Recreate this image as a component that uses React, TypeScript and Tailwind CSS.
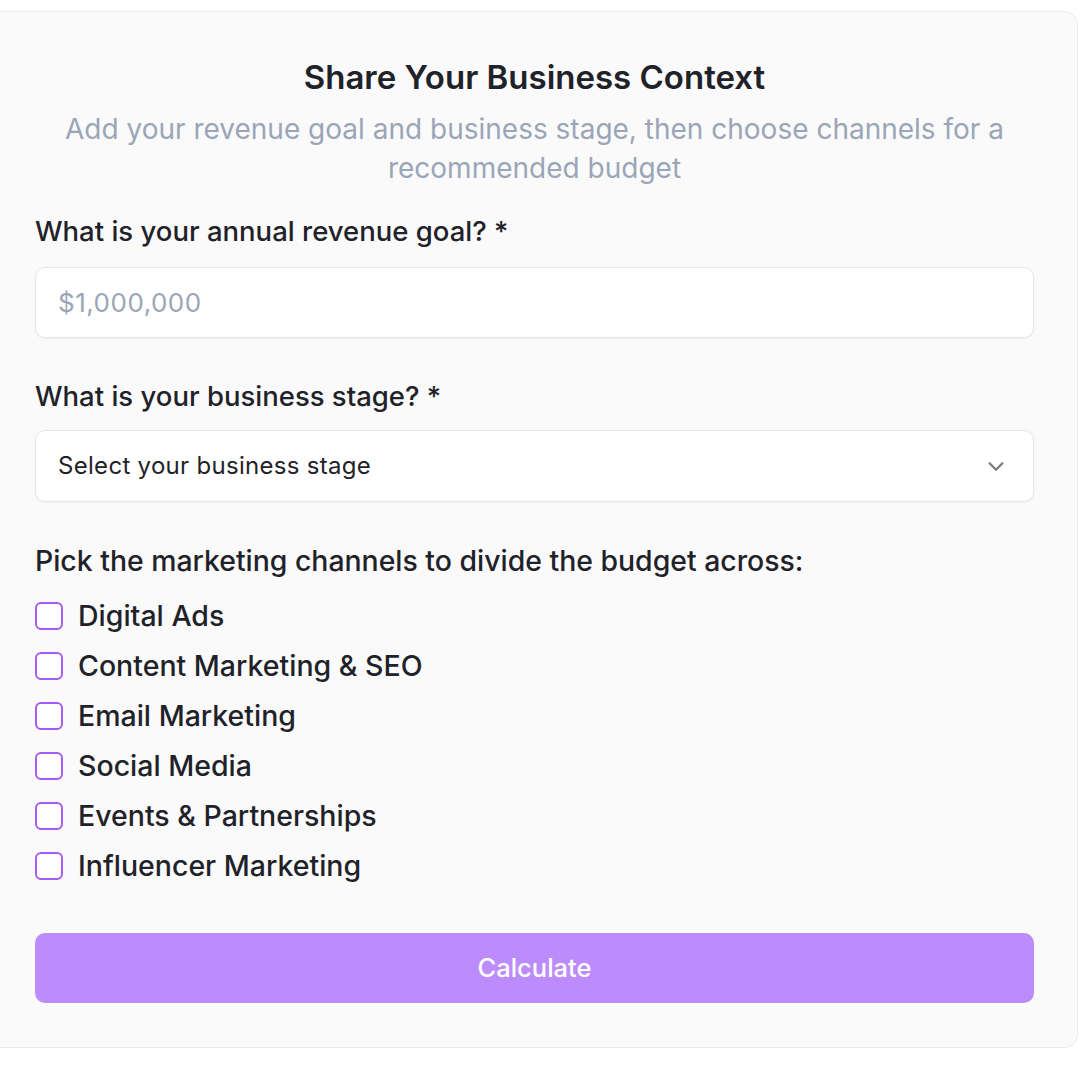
import React from "react";

const channels = [
  "Digital Ads",
  "Content Marketing & SEO",
  "Email Marketing",
  "Social Media",
  "Events & Partnerships",
  "Influencer Marketing",
];

export default function App() {
  return (
    <div className="min-h-[1080px] w-[1080px] bg-white pt-[11px]" style={{ fontFamily: "Inter, 'Noto Sans', sans-serif" }}>
      <div className="w-[1078px] h-[1037px] rounded-r-[14px] border-y border-r border-[#ececec] bg-[#fafafa] pl-[35px] pr-[43px] pt-[43px]">
        <h1 className="text-center text-[33px] leading-[44px] font-semibold tracking-[0px] text-[#1f2229]">
          Share Your Business Context
        </h1>
        <p className="mt-[11px] text-center text-[28px] leading-[39px] text-[#9aa6b8]">
          Add your revenue goal and business stage, then choose channels for a
          <br />
          recommended budget
        </p>

        <div className="mt-[23px] text-[27.5px] leading-[40px] font-medium text-[#1f2229]">What is your annual revenue goal? *</div>
        <div className="mt-[16px] flex h-[71px] items-center rounded-[10px] border border-[#e5e7eb] bg-white px-[22px] shadow-[0_1px_2px_rgba(0,0,0,0.05)]">
          <span className="text-[26px] tracking-[0.5px] text-[#9aa6b8]">$1,000,000</span>
        </div>

        <div className="mt-[38px] text-[27.5px] leading-[40px] font-medium text-[#1f2229]">What is your business stage? *</div>
        <div className="mt-[14px] flex h-[72px] items-center justify-between rounded-[10px] border border-[#e5e7eb] bg-white pl-[22px] pr-[26px] shadow-[0_1px_2px_rgba(0,0,0,0.05)]">
          <span className="text-[24px] tracking-[0.3px] text-[#1f2229]">Select your business stage</span>
          <svg width="22" height="22" viewBox="0 0 24 24" fill="none" stroke="#7a7a7a" strokeWidth="2.4" strokeLinecap="round" strokeLinejoin="round">
            <path d="M5 9l7 7 7-7" />
          </svg>
        </div>

        <div className="mt-[39px] text-[28.4px] leading-[40px] font-medium text-[#1f2229]">Pick the marketing channels to divide the budget across:</div>
        <div className="mt-[10px] flex flex-col">
          {channels.map((c) => (
            <label key={c} className="flex h-[50px] items-center gap-[15px]">
              <span className="h-[28px] w-[28px] shrink-0 rounded-[6px] border-2 border-[#a55cf5] bg-white" />
              <span className="text-[28.5px] font-medium text-[#1f2229]">{c}</span>
            </label>
          ))}
        </div>

        <button className="mt-[42px] flex h-[70px] w-full items-center justify-center rounded-[10px] bg-[#bd8cfc] text-[25.5px] font-medium text-white">
          Calculate
        </button>
      </div>
    </div>
  );
}
